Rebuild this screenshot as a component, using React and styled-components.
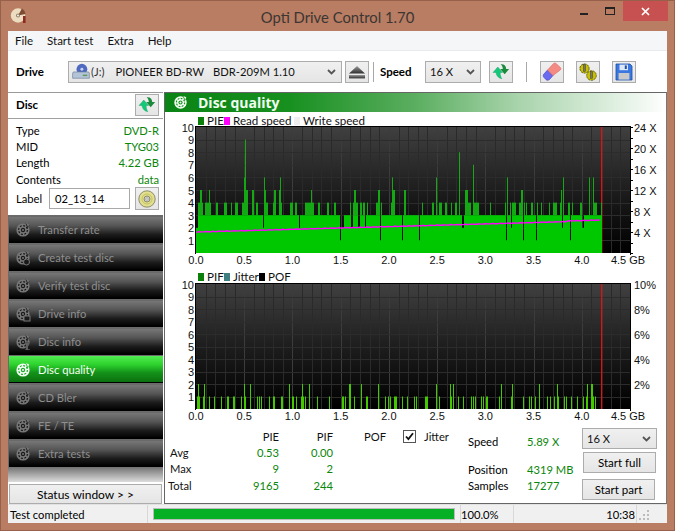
import React from "react"
import styled, { createGlobalStyle } from "styled-components"

const uiFont = `Lato, "Open Sans", sans-serif`
const chartFont = `"Liberation Sans", Arial, sans-serif`

const GlobalStyle = createGlobalStyle`
  html, body { margin: 0; padding: 0; }
  body { width: 675px; height: 531px; overflow: hidden; font-family: ${uiFont}; font-size: 11.2px; color: #000; }
`

const WindowFrame = styled.div`
  width: 675px;
  height: 531px;
  box-sizing: border-box;
  background: #b87d62;
  border: 1px solid #96604a;
  padding: 0 7px 7px;
  display: flex;
  flex-direction: column;
`

const TitleBar = styled.div`
  height: 30px;
  flex: none;
  position: relative;
  display: flex;
  align-items: center;
  justify-content: center;
  font-size: 14.8px;
  color: #3b3533;
  padding-top: 1px;
  box-sizing: border-box;
`

const AppIcon = styled.svg`
  position: absolute;
  left: 2px;
  top: 6px;
`

const WindowControls = styled.div`
  position: absolute;
  right: -1px;
  top: 0;
  display: flex;
  align-items: flex-start;
`

const ControlButton = styled.div`
  width: ${(p) => p.$w}px;
  height: 20px;
  display: flex;
  align-items: center;
  justify-content: center;
  background: ${(p) => p.$bg || "transparent"};
`

const Client = styled.div`
  flex: 1;
  display: flex;
  flex-direction: column;
  background: #fff;
  min-height: 0;
`

const MenuBar = styled.div`
  height: 19px;
  flex: none;
  background: #f5f6f7;
  display: flex;
  align-items: center;
  padding-left: 7px;
  gap: 14px;
  font-size: 11.5px;
  color: #111;
`

const Toolbar = styled.div`
  height: 42px;
  flex: none;
  box-sizing: border-box;
  border-top: 1px solid #e9eaeb;
  display: flex;
  align-items: center;
  padding: 0 0 0 8px;
`

const BoldLabel = styled.span`
  font-weight: 700;
  font-size: 11.5px;
  width: ${(p) => p.$w}px;
  flex: none;
`

const Combo = styled.div`
  width: ${(p) => p.$w}px;
  height: ${(p) => p.$h || 22}px;
  flex: none;
  box-sizing: border-box;
  border: 1px solid #acacac;
  background: linear-gradient(#f0f0f0, #e5e5e5);
  display: flex;
  align-items: center;
  padding: 0 5px 0 3px;
  color: #111;
`

const ComboText = styled.span`
  flex: 1;
  white-space: pre;
  padding-left: ${(p) => p.$pad || 0}px;
`

const Drive = styled.span`
  color: #333;
  margin-right: 11px;
`

const Model = styled.span`
  margin-left: 9px;
`

const Chevron = () => (
  <svg width="9" height="6" viewBox="0 0 9 6">
    <path d="M1 1l3.5 3.5L8 1" fill="none" stroke="#555" strokeWidth="1.8" />
  </svg>
)

const IconButton = styled.div`
  width: 24px;
  height: ${(p) => p.$h || 22}px;
  flex: none;
  box-sizing: border-box;
  border: 1px solid #acacac;
  background: linear-gradient(#f0f0f0, #e5e5e5);
  display: flex;
  align-items: center;
  justify-content: center;
  margin-left: ${(p) => p.$ml || 0}px;
`

const ToolSep = styled.div`
  width: 1px;
  height: 20px;
  flex: none;
  background: #a8a8a8;
  margin: 0 ${(p) => p.$r}px 0 ${(p) => p.$l}px;
`

const Main = styled.div`
  flex: 1;
  display: flex;
  min-height: 0;
`

const LeftColumn = styled.div`
  width: 155px;
  flex: none;
  display: flex;
  flex-direction: column;
`

const DiscPanel = styled.div`
  height: 123px;
  flex: none;
  border-top: 1px solid #9a9a9a;
  box-sizing: border-box;
  background: #fff;
`

const DiscHeader = styled.div`
  height: 26px;
  box-sizing: border-box;
  border-bottom: 1px solid #a0a0a0;
  display: flex;
  align-items: center;
  justify-content: space-between;
  padding: 0 4px 2px 8px;
`

const DiscRows = styled.div`
  padding: 3px 4px 0 8px;
`

const DiscRow = styled.div`
  height: 16.33px;
  display: flex;
  align-items: center;
  justify-content: space-between;
`

const GreenValue = styled.span`
  color: #0a860a;
`

const LabelRow = styled.div`
  display: flex;
  align-items: center;
`

const LabelText = styled.span`
  width: 33px;
  flex: none;
`

const LabelInput = styled.div`
  width: 81px;
  height: 21px;
  box-sizing: border-box;
  border: 1px solid #a9a9a9;
  padding-left: 5px;
  display: flex;
  align-items: center;
  background: #fff;
`

const Nav = styled.div`
  height: 267px;
  flex: none;
  box-sizing: border-box;
  padding: 1px 0 0 1px;
  display: flex;
  flex-direction: column;
  background: linear-gradient(#6b6b6b 0, #6b6b6b 94%, #dcdcdc 100%);
`

const NavButton = styled.div`
  height: 27px;
  flex: none;
  margin-bottom: 1px;
  box-sizing: border-box;
  border-top: 1px solid ${(p) => (p.$active ? "#55e855" : "#6a6a6a")};
  border-bottom: 1px solid #000;
  background: ${(p) =>
    p.$active
      ? "linear-gradient(#4bea4b, #2ed22e 30%, #14931a 62%, #0b700e)"
      : "linear-gradient(#777, #555 35%, #1c1c1c 70%, #000)"};
  display: flex;
  align-items: center;
  padding-left: 6px;
  gap: 7px;
  color: ${(p) => (p.$active ? "#f4fff4" : "#8e8e8e")};
`

const StatusWindow = styled.div`
  height: 20px;
  flex: none;
  box-sizing: border-box;
  margin: 2px 1px 0;
  border: 1px solid #acacac;
  background: linear-gradient(#f0f0f0, #e5e5e5);
  display: flex;
  align-items: center;
  justify-content: center;
  font-size: 12px;
`

const QualityPanel = styled.div`
  flex: 1;
  min-width: 0;
  margin-left: 1px;
  box-sizing: border-box;
  border: 1px solid #666;
  border-right-color: #777;
  display: flex;
  flex-direction: column;
  background: #fff;
`

const PanelHeader = styled.div`
  height: 19px;
  flex: none;
  background: linear-gradient(90deg, #0a8414 0%, #189020 25%, #5bae60 50%, #a7d3aa 70%, #e5f2e6 92%, #fff 100%);
  display: flex;
  align-items: center;
  padding-left: 8px;
  gap: 10px;
  color: #f0fff0;
  font-family: "Open Sans", sans-serif;
  font-weight: 700;
  font-size: 14px;
`

const Legend = styled.div`
  height: 13px;
  flex: none;
  display: flex;
  align-items: center;
  padding-left: 33px;
  margin-top: ${(p) => p.$mt}px;
  color: #111;
  white-space: nowrap;
  font-size: 11.6px;
`

const LegendSwatch = styled.i`
  width: 6px;
  height: 8px;
  background: ${(p) => p.$color};
  margin-right: 3px;
  flex: none;
`

const LegendText = styled.span`
  width: ${(p) => p.$w}px;
  flex: none;
`

const ChartSvg = styled.svg`
  display: block;
  flex: none;
  margin-top: -6px;
  font-family: ${chartFont};
  font-size: 11px;
`

const Stats = styled.div`
  flex: 1;
  display: grid;
  grid-template-columns: 303px 1fr 86px;
  min-height: 0;
`

const StatsTable = styled.div`
  display: grid;
  grid-template-columns: 50px 61px 54px 70px 1fr;
  grid-auto-rows: 16.33px;
  padding: 7px 0 0 3px;
  align-items: center;
`

const StatCell = styled.div`
  color: ${(p) => (p.$green ? "#0a860a" : "#111")};
  padding-left: ${(p) => p.$pad || 0}px;
  display: flex;
  justify-content: ${(p) => (p.$align === "right" ? "flex-end" : "flex-start")};
  align-items: center;
`

const HeaderRow = styled.div`
  display: contents;
`

const CheckBox = styled.div`
  width: 11px;
  height: 11px;
  border: 1px solid #555;
  background: #fff;
  display: flex;
  align-items: center;
  justify-content: center;
  margin-right: 8px;
`

const SpeedBlock = styled.div`
  padding: 12px 0 0 0;
  display: grid;
  grid-template-columns: 59px 1fr;
  grid-template-rows: 16px 12px 16px 16px;
  align-items: center;
  align-content: start;
`

const SpeedGap = styled.div`
  grid-column: 1 / 3;
`

const Actions = styled.div`
  display: flex;
  flex-direction: column;
  padding: 7px 0 0 2px;
`

const ActionButton = styled.div`
  width: 73px;
  height: 21px;
  box-sizing: border-box;
  border: 1px solid #acacac;
  background: linear-gradient(#f0f0f0, #e5e5e5);
  display: flex;
  align-items: center;
  justify-content: center;
  font-size: 11.5px;
  margin: ${(p) => p.$mt}px 0 0 ${(p) => p.$ml}px;
`

const StatusBar = styled.div`
  height: 19px;
  flex: none;
  box-sizing: border-box;
  background: #f0f0f0;
  border-top: 1px solid #e2e2e2;
  display: flex;
  align-items: center;
`

const StatusCell = styled.div`
  width: ${(p) => p.$w}px;
  flex: none;
  box-sizing: border-box;
  height: 100%;
  display: flex;
  align-items: center;
  justify-content: ${(p) => p.$justify || "flex-start"};
  padding: 0 ${(p) => p.$pr || 0}px 0 ${(p) => p.$pl || 0}px;
  border-right: ${(p) => (p.$noLine ? "none" : "1px solid #d8d8d8")};
`

const ProgressTrack = styled.div`
  width: 302px;
  height: 12px;
  box-sizing: border-box;
  border: 1px solid #bcbcbc;
  background: #e6e6e6;
`

const ProgressFill = styled.div`
  height: 100%;
  background: #06b025;
`

const Grip = styled.svg`
  display: block;
  margin: 4px 0 0 2px;
`

// ---- icons ----

const DiscIcon = ({ size = 16, color = "#8a8a8a", dark = "#222", badge }) => (
  <svg width={size} height={size} viewBox="0 0 16 16">
    <circle cx="8" cy="8" r="6.6" fill={color} />
    <circle cx="8" cy="8" r="4.4" fill="none" stroke={dark} strokeWidth="1.2" strokeDasharray="2 1.4" />
    <circle cx="8" cy="8" r="2.2" fill={dark} />
    <circle cx="8" cy="8" r="1" fill={color} />
    <path d="M10.5 1.5l4 1.8-2 3.4z" fill={dark} opacity=".85" />
    <path d="M11 1l3.2 1.5-1 2.4z" fill={color} />
    {badge === "round" && <circle cx="11.5" cy="12" r="3" fill={dark} stroke={color} strokeWidth="1" />}
    {badge === "doc" && <rect x="9" y="10" width="6" height="5" fill={dark} stroke={color} strokeWidth="1" />}
    {badge === "info" && <path d="M11 8h2v7h2v1h-5v-1h1z" fill={color} stroke={dark} strokeWidth=".5" />}
  </svg>
)

const RefreshIcon = () => (
  <svg width="18" height="17" viewBox="0 0 18 17">
    <path d="M1 9.5L5.8 4l4.7 5.5H8.2c0 2.6.4 4.2 1.6 6.2C6.4 15 4.2 12.8 4 9.5z" fill="#14c87a" stroke="#0e9c5e" strokeWidth=".4" />
    <path d="M8.6 1.2c3.6-.4 5.4 1.6 5.6 4.8h2.9l-4.4 5.2L8.2 6h2.6c0-2-.6-3.4-2.2-4.8z" fill="#1a8a3c" />
  </svg>
)

const EjectIcon = () => (
  <svg width="18" height="14" viewBox="0 0 18 14">
    <defs>
      <linearGradient id="ej" x1="0" y1="0" x2="0" y2="1">
        <stop offset="0" stopColor="#9a9a9a" />
        <stop offset="1" stopColor="#2e2e2e" />
      </linearGradient>
    </defs>
    <path d="M9 1l8 7.5H1z" fill="url(#ej)" />
    <rect x="1" y="10" width="16" height="3.4" fill="url(#ej)" />
  </svg>
)

const EraserIcon = () => (
  <svg width="20" height="19" viewBox="0 0 20 19">
    <path d="M1.5 12.5l4-4.5 5.5 5.5-3.5 4c-1.2 1-2.4.9-3.4.2L2 15.5c-.9-.9-1-2-.5-3z" fill="#6a6af0" stroke="#3a3ac0" strokeWidth=".6" />
    <path d="M5.5 8l6-6.4c.8-.7 1.8-.7 2.6 0l4.2 3.8c.8.8.8 1.8 0 2.6L11 13.5z" fill="#f48a84" stroke="#d86a64" strokeWidth=".6" />
  </svg>
)

const GearsIcon = () => (
  <svg width="20" height="20" viewBox="0 0 20 20">
    <g fill="#c8c000" stroke="#5c5800" strokeWidth=".9">
      <circle cx="6.5" cy="6.5" r="4.6" strokeDasharray="2.2 .7" />
      <circle cx="13.5" cy="13.5" r="4.8" strokeDasharray="2.2 .7" />
    </g>
    <rect x="5.4" y="2.5" width="2.2" height="7" fill="#77776a" stroke="#333" strokeWidth=".4" />
    <rect x="12.4" y="9.5" width="2.2" height="7" fill="#77776a" stroke="#333" strokeWidth=".4" />
  </svg>
)

const SaveIcon = () => (
  <svg width="18" height="18" viewBox="0 0 18 18">
    <path d="M1 1h14l2 2v14H1z" fill="#3a78e0" stroke="#1d4fa8" strokeWidth=".8" />
    <rect x="4.5" y="1.6" width="8.5" height="5.6" fill="#dfe8f6" />
    <rect x="9.8" y="2.4" width="2" height="3.6" fill="#1d4fa8" />
    <rect x="3.6" y="10" width="10.8" height="6.6" fill="#c9c9c9" />
  </svg>
)

const CdIcon = ({ size = 18 }) => (
  <svg width={size} height={size} viewBox="0 0 18 18">
    <circle cx="9" cy="9" r="8.2" fill="#e2e08e" stroke="#77775a" strokeWidth=".8" />
    <circle cx="9" cy="9" r="5" fill="none" stroke="#c4c260" strokeWidth="1" />
    <circle cx="9" cy="9" r="3" fill="#cfcfcf" stroke="#77775a" strokeWidth=".8" />
    <circle cx="9" cy="9" r="1.2" fill="#fff" stroke="#77775a" strokeWidth=".5" />
  </svg>
)

const DriveIcon = () => (
  <svg width="18" height="17" viewBox="0 0 20 18">
    <circle cx="11" cy="6.5" r="6" fill="#4f68c0" />
    <circle cx="11" cy="6.5" r="1.6" fill="#c8d4f4" />
    <path d="M1.5 9.5h17l.8 1.5v5.5H.7V11z" fill="#b4c4d8" stroke="#667a92" strokeWidth=".7" />
    <rect x="12" y="12.5" width="5" height="1.6" fill="#5a9a5a" />
  </svg>
)

const TitleCd = () => (
  <AppIcon width="16" height="17" viewBox="0 0 16 17">
    <circle cx="8" cy="8.5" r="7.2" fill="#ecdcc0" />
    <path d="M8 8.5L12 1.5A8 8 0 0 1 15.5 7z" fill="#7d4a32" />
    <path d="M13 9h2.6v7H13z" fill="#8c2c20" />
    <circle cx="8" cy="8.5" r="2" fill="#8d7d66" />
    <circle cx="8" cy="8.5" r=".9" fill="#fff" />
  </AppIcon>
)

// ---- chart ----

function seeded(seed) {
  let s = seed
  return () => {
    s = (s * 16807) % 2147483647
    return (s - 1) / 2147483646
  }
}

const PLOT_LEFT = 31
const PLOT_RIGHT = 465
const GB_PX = 96.45
const gbX = (gb) => PLOT_LEFT + gb * GB_PX

// column values for the PIE graph, one per pixel up to the end of the disc
const spikes = { 49: 9, 48: 6, 68: 6, 84: 6, 196: 6, 263: 8, 277: 7, 240: 6, 311: 6, 367: 6, 393: 6, 397: 6 }
const dips = [144, 184, 206, 223, 310, 327, 340, 374]

function buildPie() {
  const rnd = seeded(4711)
  const out = []
  let hold = 0
  let holdValue = 3
  for (let i = 0; i < 406; i++) {
    if (hold <= 0) {
      const r = rnd()
      holdValue = r < 0.08 ? 2 : r < 0.5 ? 3 : r < 0.84 ? 4 : 5
      if (i > 190 && holdValue === 5 && rnd() < 0.6) holdValue = 3
      hold = holdValue === 3 ? 1 + Math.floor(rnd() * 5) : 1 + Math.floor(rnd() * 2)
    }
    hold--
    let v = holdValue
    if (spikes[i]) v = spikes[i]
    if (dips.includes(i)) v = 1
    out.push(v)
  }
  return out
}

const pifTwos = [
  100, 118, 238, 256, 373, 412, 433, 553, 556, 589, 640,
].map((z) => 165 + z / 3).concat(
  [49, 91, 100, 244, 277, 358, 412, 502, 514, 517].map((z) => 420 + z / 3)
)

const pifOnes = [
  96, 99, 102, 115, 118, 133, 148, 169, 186, 189, 203, 206, 229, 241, 277, 283, 289, 313, 323, 326, 347, 350, 382, 385, 394, 409,
  412, 415, 421, 457, 493, 530, 533, 541, 568, 604, 607, 661, 670, 676, 688, 691, 694, 712, 727, 748, 754,
].map((z) => 165 + z / 3).concat(
  [15, 18, 21, 58, 91, 94, 115, 130, 154, 160, 166, 184, 190, 199, 202, 238, 274, 277, 310, 328, 334, 346, 382, 391, 403, 415, 433, 439, 454, 472, 490, 499, 502, 514, 517, 520, 526].map(
    (z) => 420 + z / 3
  )
)

const Chart = ({ plotTop, plotHeight, gradId, rightLabels, ticks, children }) => {
  const height = 144
  const bottom = plotTop + plotHeight
  const unit = plotHeight / 10
  const xLabels = ["0.0", "0.5", "1.0", "1.5", "2.0", "2.5", "3.0", "3.5", "4.0"]
  return (
    <ChartSvg width="501" height={height} viewBox={`0 0 501 ${height}`}>
      <defs>
        <linearGradient id={gradId} x1="0" y1="0" x2="0" y2="1">
          <stop offset="0" stopColor="#404040" />
          <stop offset="0.55" stopColor="#1a1a1a" />
          <stop offset="1" stopColor="#000" />
        </linearGradient>
      </defs>
      <rect x={PLOT_LEFT} y={plotTop} width={PLOT_RIGHT - PLOT_LEFT} height={plotHeight} fill={`url(#${gradId})`} />
      {Array.from({ length: 45 }, (_, i) => (
        <rect
          key={i}
          x={Math.round(gbX((i + 1) * 0.1))}
          y={plotTop}
          width="1"
          height={plotHeight}
          fill={(i + 1) % 5 === 0 ? "#3c3c3c" : "#2a2a2a"}
        />
      ))}
      {Array.from({ length: 9 }, (_, i) => (
        <rect key={i} x={PLOT_LEFT} y={Math.round(plotTop + unit * (i + 1))} width={PLOT_RIGHT - PLOT_LEFT} height="1" fill="#2c2c2c" />
      ))}
      {children}
      <rect x={PLOT_LEFT - 1} y={plotTop - 1} width={PLOT_RIGHT - PLOT_LEFT + 2} height="1" fill="#000" />
      <rect x={PLOT_LEFT - 1} y={plotTop - 1} width="1" height={plotHeight + 2} fill="#000" />
      <rect x={PLOT_RIGHT} y={plotTop - 1} width="1" height={plotHeight + 3} fill="#000" />
      {Array.from({ length: 10 }, (_, i) => (
        <text key={i} x={PLOT_LEFT - 2} y={plotTop + unit * i + 4.5} textAnchor="end" fill="#111">
          {10 - i}
        </text>
      ))}
      {xLabels.map((t, i) => (
        <text key={t} x={gbX(i * 0.5)} y={bottom + 11} textAnchor="middle" fill="#111">
          {t}
        </text>
      ))}
      <text x={gbX(4.5) - 2} y={bottom + 11} textAnchor="middle" fill="#111">
        4.5 GB
      </text>
      {ticks &&
        Array.from({ length: 13 }, (_, i) => (
          <rect key={i} x={PLOT_RIGHT} y={Math.round(plotTop + (i * plotHeight) / 12)} width="3" height="1" fill="#000" />
        ))}
      {rightLabels.map((l) => (
        <text key={l.t} x={PLOT_RIGHT + 4} y={plotTop + l.at * plotHeight + 4.5} fill="#111">
          {l.t}
        </text>
      ))}
    </ChartSvg>
  )
}

const PieChart = () => {
  const plotTop = 6
  const plotHeight = 126
  const bottom = plotTop + plotHeight
  const unit = plotHeight / 10
  const pie = buildPie()
  const speed = Array.from({ length: 405 }, (_, i) => {
    const v = 1.66 + (i / 405) * 0.9 + (i > 370 ? 0.05 : 0)
    return `${PLOT_LEFT + i},${(bottom - v * unit + (i % 7 === 3 ? -0.5 : 0)).toFixed(1)}`
  }).join(" ")
  return (
    <Chart
      plotTop={plotTop}
      plotHeight={plotHeight}
      gradId="pieBg"
      ticks
      rightLabels={[
        { t: "24 X", at: 0 },
        { t: "20 X", at: 1 / 6 },
        { t: "16 X", at: 2 / 6 },
        { t: "12 X", at: 3 / 6 },
        { t: "8 X", at: 4 / 6 },
        { t: "4 X", at: 5 / 6 },
      ]}
    >
      <rect x="436" y={plotTop} width="1.4" height={plotHeight} fill="#d01818" />
      {pie.map((v, i) => (
        <React.Fragment key={i}>
          {v > 3 && <rect x={PLOT_LEFT + i} y={bottom - v * unit} width="1" height={(v - 3) * unit} fill="#14a814" />}
          <rect x={PLOT_LEFT + i} y={bottom - Math.min(v, 3) * unit} width="1" height={Math.min(v, 3) * unit} fill="#00c800" />
        </React.Fragment>
      ))}
      <polyline points={speed} fill="none" stroke="#ff00ff" strokeWidth="1.4" />
    </Chart>
  )
}

const PifChart = () => {
  const plotTop = 7
  const plotHeight = 125
  const bottom = plotTop + plotHeight
  const unit = plotHeight / 10
  return (
    <Chart
      plotTop={plotTop}
      plotHeight={plotHeight}
      gradId="pifBg"
      rightLabels={[
        { t: "10%", at: 0 },
        { t: "8%", at: 0.2 },
        { t: "6%", at: 0.4 },
        { t: "4%", at: 0.6 },
        { t: "2%", at: 0.8 },
      ]}
    >
      <rect x="436" y={plotTop} width="1.4" height={plotHeight} fill="#d01818" />
      {pifOnes.map((x, i) => (
        <rect key={i} x={Math.round(x) - 165} y={bottom - unit} width="1" height={unit} fill="#44c800" />
      ))}
      {pifTwos.map((x, i) => (
        <rect key={i} x={Math.round(x) - 165} y={bottom - 2 * unit} width="1" height={2 * unit} fill="#44c800" />
      ))}
    </Chart>
  )
}

const navItems = [
  { label: "Transfer rate" },
  { label: "Create test disc", badge: "round" },
  { label: "Verify test disc" },
  { label: "Drive info", badge: "doc" },
  { label: "Disc info", badge: "info" },
  { label: "Disc quality", active: true },
  { label: "CD Bler" },
  { label: "FE / TE" },
  { label: "Extra tests" },
]

const discRows = [
  ["Type", "DVD-R"],
  ["MID", "TYG03"],
  ["Length", "4.22 GB"],
  ["Contents", "data"],
]

const App = () => {
  return (
    <>
      <GlobalStyle />
      <WindowFrame>
        <TitleBar>
          <TitleCd />
          Opti Drive Control 1.70
          <WindowControls>
            <ControlButton $w={26}>
              <svg width="8" height="3" viewBox="0 0 8 3" style={{ marginTop: 6 }}>
                <rect width="8" height="2" fill="#222" />
              </svg>
            </ControlButton>
            <ControlButton $w={26}>
              <svg width="11" height="9" viewBox="0 0 11 9">
                <rect x=".5" y=".5" width="9" height="7" fill="none" stroke="#222" />
                <rect width="10" height="2" fill="#222" />
              </svg>
            </ControlButton>
            <ControlButton $w={45} $bg="#c75050">
              <svg width="9" height="9" viewBox="0 0 9 9">
                <path d="M1 1l7 7M8 1l-7 7" stroke="#fff" strokeWidth="1.7" />
              </svg>
            </ControlButton>
          </WindowControls>
        </TitleBar>
        <Client>
          <MenuBar>
            <span>File</span>
            <span>Start test</span>
            <span>Extra</span>
            <span>Help</span>
          </MenuBar>
          <Toolbar>
            <BoldLabel $w={52}>Drive</BoldLabel>
            <Combo $w={274}>
              <DriveIcon />
              <ComboText $pad={1}>
                <Drive>(J:)</Drive>PIONEER BD-RW<Model>BDR-209M 1.10</Model>
              </ComboText>
              <Chevron />
            </Combo>
            <IconButton $ml={3}>
              <EjectIcon />
            </IconButton>
            <ToolSep $l={4} $r={6} />
            <BoldLabel $w={45}>Speed</BoldLabel>
            <Combo $w={56}>
              <ComboText $pad={1}>16 X</ComboText>
              <Chevron />
            </Combo>
            <IconButton $ml={8}>
              <RefreshIcon />
            </IconButton>
            <ToolSep $l={13} $r={13} />
            <IconButton>
              <EraserIcon />
            </IconButton>
            <IconButton $ml={12}>
              <GearsIcon />
            </IconButton>
            <IconButton $ml={12}>
              <SaveIcon />
            </IconButton>
          </Toolbar>
          <Main>
            <LeftColumn>
              <DiscPanel>
                <DiscHeader>
                  <BoldLabel $w={40}>Disc</BoldLabel>
                  <IconButton>
                    <RefreshIcon />
                  </IconButton>
                </DiscHeader>
                <DiscRows>
                  {discRows.map(([k, v]) => (
                    <DiscRow key={k}>
                      <span>{k}</span>
                      <GreenValue>{v}</GreenValue>
                    </DiscRow>
                  ))}
                  <LabelRow>
                    <LabelText>Label</LabelText>
                    <LabelInput>02_13_14</LabelInput>
                    <IconButton $ml={5} $h={23}>
                      <CdIcon />
                    </IconButton>
                  </LabelRow>
                </DiscRows>
              </DiscPanel>
              <Nav>
                {navItems.map((n) => (
                  <NavButton key={n.label} $active={n.active}>
                    <DiscIcon
                      color={n.active ? "#f4fff4" : "#777"}
                      dark={n.active ? "#1aa82a" : "#1a1a1a"}
                      badge={n.badge}
                    />
                    {n.label}
                  </NavButton>
                ))}
              </Nav>
              <StatusWindow>Status window &gt; &gt;</StatusWindow>
            </LeftColumn>
            <QualityPanel>
              <PanelHeader>
                <DiscIcon size={15} color="#f4fff4" dark="#159020" />
                Disc quality
              </PanelHeader>
              <Legend $mt={2}>
                <LegendSwatch $color="#0a800a" />
                <LegendText $w={17}>PIE</LegendText>
                <LegendSwatch $color="#ff00ff" />
                <LegendText $w={61}>Read speed</LegendText>
                <LegendSwatch $color="#eeeeee" />
                <LegendText $w={70}>Write speed</LegendText>
              </Legend>
              <PieChart />
              <Legend $mt={5}>
                <LegendSwatch $color="#0a800a" />
                <LegendText $w={17}>PIF</LegendText>
                <LegendSwatch $color="#408080" />
                <LegendText $w={26}>Jitter</LegendText>
                <LegendSwatch $color="#000" />
                <LegendText $w={30}>POF</LegendText>
              </Legend>
              <PifChart />
              <Stats>
                <StatsTable>
                  <HeaderRow>
                    <StatCell />
                    <StatCell $align="right">PIE</StatCell>
                    <StatCell $align="right">PIF</StatCell>
                    <StatCell $pad={31}>POF</StatCell>
                    <StatCell>
                      <CheckBox>
                        <svg width="9" height="9" viewBox="0 0 9 9">
                          <path d="M1 4.5l2.4 2.6L8 1.2" fill="none" stroke="#111" strokeWidth="1.8" />
                        </svg>
                      </CheckBox>
                      Jitter
                    </StatCell>
                  </HeaderRow>
                  <StatCell $pad={2}>Avg</StatCell>
                  <StatCell $align="right" $green>0.53</StatCell>
                  <StatCell $align="right" $green>0.00</StatCell>
                  <StatCell />
                  <StatCell />
                  <StatCell $pad={2}>Max</StatCell>
                  <StatCell $align="right" $green>9</StatCell>
                  <StatCell $align="right" $green>2</StatCell>
                  <StatCell />
                  <StatCell />
                  <StatCell>Total</StatCell>
                  <StatCell $align="right" $green>9165</StatCell>
                  <StatCell $align="right" $green>244</StatCell>
                </StatsTable>
                <SpeedBlock>
                  <span>Speed</span>
                  <GreenValue>5.89 X</GreenValue>
                  <SpeedGap />
                  <span>Position</span>
                  <GreenValue>4319 MB</GreenValue>
                  <span>Samples</span>
                  <GreenValue>17277</GreenValue>
                </SpeedBlock>
                <Actions>
                  <Combo $w={75} $h={21}>
                    <ComboText $pad={1}>16 X</ComboText>
                    <Chevron />
                  </Combo>
                  <ActionButton $mt={3} $ml={1}>Start full</ActionButton>
                  <ActionButton $mt={6} $ml={0}>Start part</ActionButton>
                </Actions>
              </Stats>
            </QualityPanel>
          </Main>
          <StatusBar>
            <StatusCell $w={140} $pl={2}>Test completed</StatusCell>
            <StatusCell $w={313} $pl={5}>
              <ProgressTrack>
                <ProgressFill />
              </ProgressTrack>
            </StatusCell>
            <StatusCell $w={53}>100.0%</StatusCell>
            <StatusCell $w={123} $justify="flex-end" $pr={1}>10:38</StatusCell>
            <StatusCell $w={24} $noLine>
              <Grip width="12" height="12" viewBox="0 0 12 12">
                <g fill="#bcbcbc">
                  <rect x="8" y="0" width="2" height="2" />
                  <rect x="4" y="4" width="2" height="2" />
                  <rect x="8" y="4" width="2" height="2" />
                  <rect x="0" y="8" width="2" height="2" />
                  <rect x="4" y="8" width="2" height="2" />
                  <rect x="8" y="8" width="2" height="2" />
                </g>
              </Grip>
            </StatusCell>
          </StatusBar>
        </Client>
      </WindowFrame>
    </>
  )
}

export default App
